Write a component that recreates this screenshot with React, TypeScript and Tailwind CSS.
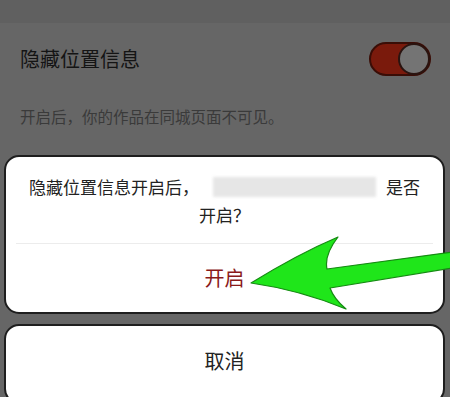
import React from "react";

const FONT = { fontFamily: '"Noto Sans CJK SC", "Noto Sans", sans-serif' };

function Toggle() {
  return (
    <div className="relative h-[34px] w-[62px] rounded-full bg-[#7a1a0c] border-2 border-[#3a0d06]">
      <div className="absolute right-[-1px] top-[-1px] h-[32px] w-[32px] rounded-full bg-[#747474] border-2 border-[#2a1410]" />
    </div>
  );
}

function Arrow() {
  return (
    <svg
      className="pointer-events-none absolute left-0 top-0"
      width="450"
      height="397"
      viewBox="0 0 450 397"
      aria-hidden
    >
      <path
        d="M251 283 Q298 254 338 237 Q324 255 327 269 L452 252 L452 268 L330 288 Q334 299 346 309 Q300 290 251 283 Z"
        fill="#1fe61a"
        stroke="#158a12"
        strokeWidth="1.2"
        strokeLinejoin="round"
      />
    </svg>
  );
}

export default function App() {
  return (
    <div className="relative h-[397px] w-[450px] overflow-hidden bg-[#666666]" style={FONT}>
      <div className="h-[23px] bg-[#606060]" />
      <div className="flex h-[72px] items-center justify-between pl-[20px] pr-[19px]">
        <span className="text-[20px] text-[#141414]">隐藏位置信息</span>
        <Toggle />
      </div>
      <div className="flex h-[44px] items-center pl-[20px] text-[15.5px] text-[#3a3a3a]">
        开启后，你的作品在同城页面不可见。
      </div>

      <div className="mt-[16px] flex flex-col gap-[10px] pl-[4px] pr-[5px]">
        <div className="rounded-[15px] border-2 border-[#1e1e1e] bg-white">
          <div className="flex flex-col items-center pt-[16px] pb-[14px] text-[17px] leading-[28px] text-[#222]">
            <div className="flex items-center">
              <span>隐藏位置信息开启后，</span>
              <span className="ml-[14px] mr-[10px] inline-block h-[20px] w-[163px] bg-[#e6e6e6] blur-[1.5px]" />
              <span>是否</span>
            </div>
            <div>开启？</div>
          </div>
          <div className="mx-[10px] h-px bg-[#ececec]" />
          <div className="flex h-[68px] items-center justify-center text-[20px] text-[#8a1a1a]">
            开启
          </div>
        </div>

        <div className="h-[80px] rounded-[15px] border-2 border-[#1e1e1e] bg-white">
          <div className="flex h-[70px] items-center justify-center text-[20px] text-[#222]">
            取消
          </div>
        </div>
      </div>

      <Arrow />
    </div>
  );
}
